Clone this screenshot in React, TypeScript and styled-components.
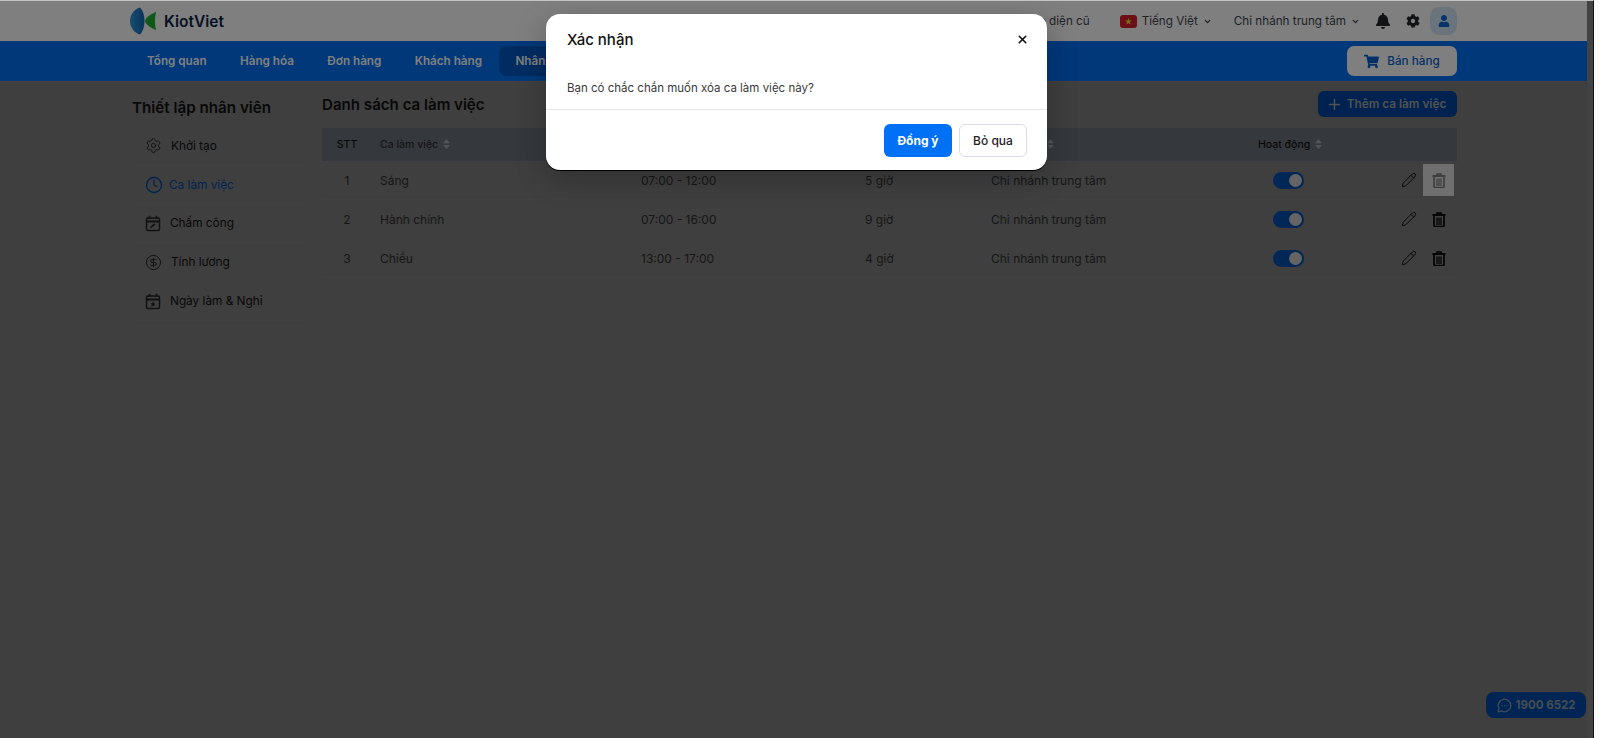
import React from "react";
import styled, { createGlobalStyle } from "styled-components";
import { Settings, Clock, CircleDollarSign, Pencil, Plus, MessageCircleMore, ChevronDown, X } from "lucide-react";
import { FaBell, FaCog, FaUser, FaShoppingCart } from "react-icons/fa";

const Global = createGlobalStyle`
  html, body { margin: 0; padding: 0; height: 738px; overflow: hidden; background: #fbfbfb; }
  body, button { font-family: Inter, "Noto Sans", sans-serif; }
  * { box-sizing: border-box; }
`;

const Frame = styled.div`
  display: flex;
  width: 1600px;
  height: 738px;
  background: #fbfbfb;
`;
const Window = styled.div`
  position: relative;
  width: 1594px;
  height: 738px;
  display: flex;
  overflow: hidden;
  border-top: 1px solid #c4c4c4;
  border-right: 1px solid #111;
`;
const Page = styled.div`
  width: 1587px;
  display: flex;
  flex-direction: column;
  background: #7e7e7e;
`;
const ScrollStrip = styled.div`
  flex: 1;
  background: #858585;
`;
const TopBar = styled.header`
  height: 40px;
  flex: none;
  display: flex;
  align-items: center;
  padding: 0 130px 0 130px;
`;
const TopBarWrap = styled.div`
  background: #ffffff;
`;
const Logo = styled.div`
  display: flex;
  align-items: center;
  gap: 7px;
  font-size: 15.5px;
  font-weight: 600;
  color: #0b2347;
`;
const TopLinks = styled.div`
  margin-left: auto;
  display: flex;
  align-items: center;
  font-size: 11.7px;
  color: #3f4650;
`;
const TopLink = styled.span<{ $gap?: number }>`
  display: inline-flex;
  align-items: center;
  gap: 5px;
  margin-right: ${(p) => p.$gap ?? 0}px;
`;
const IconBtn = styled.span<{ $gap?: number }>`
  display: inline-flex;
  color: #22262b;
  margin-right: ${(p) => p.$gap ?? 0}px;
`;
const Avatar = styled.span`
  width: 27px;
  height: 28px;
  border-radius: 9px;
  background: #d7e6f8;
  color: #0a66d8;
  display: inline-flex;
  align-items: center;
  justify-content: center;
`;
const NavBar = styled.nav`
  height: 40px;
  flex: none;
  background: #0070f4;
  display: flex;
  align-items: center;
  padding: 0 130px 0 131px;
`;
const NavItem = styled.a<{ $active?: boolean }>`
  height: 30px;
  display: flex;
  align-items: center;
  padding: 0 17.4px 0 16px;
  border-radius: 7px;
  font-size: 11.7px;
  font-weight: 600;
  color: #fff;
  background: ${(p) => (p.$active ? "#0058c4" : "transparent")};
`;
const SellBtn = styled.button`
  margin-left: auto;
  width: 110px;
  height: 30px;
  border: 0;
  border-radius: 7px;
  background: #fff;
  color: #0a5fd0;
  font-size: 11.7px;
  font-weight: 500;
  display: flex;
  align-items: center;
  justify-content: center;
  gap: 8px;
`;
const Body = styled.main`
  display: flex;
  padding: 10px 130px 0 131px;
  flex: 1;
`;
const Side = styled.aside`
  width: 191px;
  flex: none;
`;
const SideTitle = styled.h2`
  margin: 7px 0 9px 1px;
  font-size: 15.2px;
  line-height: 20px;
  font-weight: 600;
  color: #111;
`;
const SideRow = styled.div<{ $active?: boolean }>`
  height: 38.800px;
  width: 174px;
  padding: 0 0 0 14px;
  display: flex;
  align-items: center;
  gap: ${(p) => (p.$active ? 6 : 9)}px;
  font-size: 11.8px;
  color: ${(p) => (p.$active ? "#0048a0" : "#111")};
  font-weight: 400;
  border-bottom: 1px solid #828282;
`;
const Content = styled.section`
  flex: 1;
  min-width: 0;
`;
const ContentHead = styled.div`
  height: 26px;
  display: flex;
  align-items: center;
  justify-content: space-between;
`;
const ContentTitle = styled.h1`
  margin: 1px 0 0 0;
  font-size: 15.1px;
  font-weight: 600;
  color: #111;
`;
const AddBtn = styled.button`
  width: 139px;
  height: 26px;
  border: 0;
  border-radius: 6px;
  padding: 0 3px 0 0;
  background: #0044a0;
  color: #a4a4a4;
  font-size: 11.8px;
  font-weight: 600;
  display: flex;
  align-items: center;
  justify-content: center;
  gap: 4px;
`;
const Table = styled.div`
  margin-top: 11px;
`;
const Cols = "50px 261px 224px 126px 267px 140px 1fr";
const HeadRow = styled.div`
  display: grid;
  grid-template-columns: ${Cols};
  height: 33px;
  align-items: center;
  background: #6a737b;
  font-size: 10.5px;
  font-weight: 500;
  color: #111;
  padding-bottom: 1px;
`;
const HeadCell = styled.span<{ $center?: boolean; $muted?: boolean }>`
  display: inline-flex;
  align-items: center;
  gap: 5px;
  padding-left: ${(p) => (p.$center ? 0 : 8)}px;
  justify-content: ${(p) => (p.$center ? "center" : "flex-start")};
  color: ${(p) => (p.$muted ? "#2a2a2a" : "#111")};
`;
const Row = styled.div`
  display: grid;
  grid-template-columns: ${Cols};
  height: 39px;
  align-items: center;
  border-bottom: 1px solid #838383;
  font-size: 12px;
  color: #2e2e2e;
`;
const Cell = styled.span<{ $center?: boolean }>`
  padding-left: ${(p) => (p.$center ? 0 : 8)}px;
  text-align: ${(p) => (p.$center ? "center" : "left")};
`;
const ToggleCell = styled.span`
  padding-left: 23px;
  display: flex;
`;
const Toggle = styled.span`
  width: 31px;
  height: 17px;
  border-radius: 9px;
  background: #004eac;
  padding: 2px;
  display: flex;
  justify-content: flex-end;
`;
const Knob = styled.span`
  width: 13px;
  height: 13px;
  border-radius: 50%;
  background: #c8c8c8;
`;
const Actions = styled.span`
  display: flex;
  align-items: center;
  padding-left: 9px;
  gap: 9px;
`;
const EditIcon = styled.span`
  width: 20px;
  display: inline-flex;
  justify-content: center;
  color: #111;
`;
const TrashBox = styled.span<{ $hover?: boolean }>`
  width: 31px;
  height: 32px;
  margin-left: -5px;
  display: inline-flex;
  align-items: center;
  justify-content: center;
  background: ${(p) => (p.$hover ? "#dedede" : "transparent")};
  color: ${(p) => (p.$hover ? "#777" : "#000")};
`;
const Hotline = styled.div`
  position: absolute;
  left: 1486px;
  top: 691px;
  width: 100px;
  height: 26px;
  border-radius: 8px;
  background: #004aa8;
  color: #8f98a6;
  font-size: 11.5px;
  font-weight: 700;
  display: flex;
  align-items: center;
  justify-content: center;
  gap: 4px;
`;
const Overlay = styled.div`
  position: absolute;
  inset: 0;
  background: rgba(0, 0, 0, 0.5);
  display: flex;
  justify-content: center;
  align-items: flex-start;
  padding-top: 13px;
`;
const Modal = styled.div`
  width: 501px;
  height: 156px;
  background: #fff;
  border-radius: 14px;
  box-shadow: 0 1px 0 #000, 0 8px 30px rgba(0, 0, 0, 0.25);
  display: flex;
  flex-direction: column;
`;
const ModalHead = styled.div`
  height: 51px;
  padding: 0 20px 0 21px;
  display: flex;
  align-items: center;
  justify-content: space-between;
  font-size: 15px;
  font-weight: 500;
  color: #111;
`;
const CloseMark = styled.span`
  display: inline-flex;
  margin-right: -2px;
`;
const ModalBody = styled.div`
  height: 45px;
  padding: 14px 21px 0;
  font-size: 11.5px;
  line-height: 18px;
  color: #3a3a3a;
  border-bottom: 1px solid #e6e6e6;
`;
const ModalFoot = styled.div`
  flex: 1;
  display: flex;
  justify-content: flex-end;
  align-items: center;
  gap: 7px;
  padding: 0 20px;
`;
const Primary = styled.button`
  width: 68px;
  height: 33px;
  border: 0;
  border-radius: 6px;
  background: #0070f4;
  color: #fff;
  font-size: 12px;
  font-weight: 700;
`;
const Secondary = styled.button`
  width: 68px;
  height: 33px;
  border: 1px solid #d9dde2;
  border-radius: 6px;
  background: #fff;
  color: #222;
  font-size: 12px;
  font-weight: 500;
`;

const SortIcon = () => (
  <svg width="7" height="10" viewBox="0 0 8 11" fill="#a4acb4">
    <path d="M4 0 8 4.500H0zM4 11 0 6.500h8z" />
  </svg>
);
const LogoMark = () => (
  <svg width="27" height="28" viewBox="0 0 27 28">
    <defs>
      <linearGradient id="lg" x1="0" x2="1" y1="0" y2="0">
        <stop offset="0" stopColor="#2f9bd8" />
        <stop offset="1" stopColor="#1366b8" />
      </linearGradient>
    </defs>
    <path d="M10 0.500C4 2 0 8 0 14s4 12 10 13.500c3-3 4.500-8 4.500-13.500S13 3.500 10 .5z" fill="url(#lg)" />
    <path d="M26 5C21 7 16 10 15 14c1 4 6 7 11 9-.8-3-1-6-1-9s.2-6 1-9z" fill="#18b233" />
  </svg>
);
const Flag = () => (
  <svg width="17" height="13" viewBox="0 0 17 13">
    <rect width="17" height="13" rx="3" fill="#d9202a" />
    <path d="M8.500 3l.9 2.500h2.600l-2.100 1.600.8 2.500-2.200-1.500-2.200 1.500.8-2.500L5 5.500h2.600z" fill="#ffd83a" />
  </svg>
);
const CalendarIcon = ({ star }: { star?: boolean }) => (
  <svg width="16" height="17" viewBox="0 0 16 17" fill="none" stroke="#222" strokeWidth="1.500">
    <rect x="1.500" y="3" width="13" height="12.500" rx="1.500" />
    <path d="M1 6.500h14" strokeWidth="2" />
    <path d="M4.500 .8v3M11.500 .8v3" strokeWidth="1.600" />
    {star ? (
      <path d="M8 8.500l.8 1.700 1.800.2-1.300 1.200.4 1.800L8 12.500l-1.700.9.400-1.800-1.300-1.200 1.800-.2z" fill="#222" stroke="none" />
    ) : (
      <path d="M5.500 12.500 10 9" strokeWidth="1.600" />
    )}
  </svg>
);
const TrashIcon = () => (
  <svg width="14" height="15" viewBox="0 0 14 15" fill="none" stroke="currentColor">
    <path d="M0.500 3h13" strokeWidth="1.800" />
    <path d="M5 2.500V1h4v1.500" strokeWidth="1.500" />
    <path d="M2 3.500v10a1 1 0 0 0 1 1h8a1 1 0 0 0 1-1v-10" strokeWidth="1.600" />
    <path d="M5 5.500V13M7 5.500V13M9 5.500V13" strokeWidth="1.200" />
  </svg>
);

const navItems = ["Tổng quan", "Hàng hóa", "Đơn hàng", "Khách hàng"];
const shifts = [
  { id: 1, name: "Sáng", time: "07:00 - 12:00", hours: "5 giờ" },
  { id: 2, name: "Hành chính", time: "07:00 - 16:00", hours: "9 giờ" },
  { id: 3, name: "Chiều", time: "13:00 - 17:00", hours: "4 giờ" },
];

export default function App() {
  return (
    <Frame>
      <Global />
      <Window>
        <Page>
          <TopBarWrap>
            <TopBar>
              <Logo>
                <LogoMark />
                KiotViet
              </Logo>
              <TopLinks>
                <TopLink $gap={30}>Giao diện cũ</TopLink>
                <TopLink $gap={22}>
                  <Flag />
                  Tiếng Việt
                  <ChevronDown size={9} strokeWidth={3.5} />
                </TopLink>
                <TopLink $gap={15}>
                  Chi nhánh trung tâm
                  <ChevronDown size={9} strokeWidth={3.5} />
                </TopLink>
                <IconBtn $gap={15}>
                  <FaBell size={16} />
                </IconBtn>
                <IconBtn $gap={10}>
                  <FaCog size={14} />
                </IconBtn>
                <Avatar>
                  <FaUser size={12} />
                </Avatar>
              </TopLinks>
            </TopBar>
          </TopBarWrap>
          <NavBar>
            {navItems.map((n) => (
              <NavItem key={n}>{n}</NavItem>
            ))}
            <NavItem $active>Nhân viên</NavItem>
            <SellBtn>
              <FaShoppingCart size={15} />
              Bán hàng
            </SellBtn>
          </NavBar>
          <Body>
            <Side>
              <SideTitle>Thiết lập nhân viên</SideTitle>
              <SideRow>
                <Settings size={17} strokeWidth={1.4} color="#222" />
                Khởi tạo
              </SideRow>
              <SideRow $active>
                <Clock size={18} strokeWidth={1.8} color="#0048a0" />
                Ca làm việc
              </SideRow>
              <SideRow>
                <CalendarIcon />
                Chấm công
              </SideRow>
              <SideRow>
                <CircleDollarSign size={17} strokeWidth={1.4} color="#222" />
                Tính lương
              </SideRow>
              <SideRow>
                <CalendarIcon star />
                Ngày làm & Nghỉ
              </SideRow>
            </Side>
            <Content>
              <ContentHead>
                <ContentTitle>Danh sách ca làm việc</ContentTitle>
                <AddBtn>
                  <Plus size={17} />
                  Thêm ca làm việc
                </AddBtn>
              </ContentHead>
              <Table>
                <HeadRow>
                  <HeadCell $center>STT</HeadCell>
                  <HeadCell $muted>
                    Ca làm việc <SortIcon />
                  </HeadCell>
                  <HeadCell $muted>Thời gian</HeadCell>
                  <HeadCell $muted>Số giờ</HeadCell>
                  <HeadCell $muted>
                    Chi nhánh <SortIcon />
                  </HeadCell>
                  <HeadCell>
                    Hoạt động <SortIcon />
                  </HeadCell>
                  <span />
                </HeadRow>
                {shifts.map((s) => (
                  <Row key={s.id}>
                    <Cell $center>{s.id}</Cell>
                    <Cell>{s.name}</Cell>
                    <Cell>{s.time}</Cell>
                    <Cell>{s.hours}</Cell>
                    <Cell>Chi nhánh trung tâm</Cell>
                    <ToggleCell>
                      <Toggle>
                        <Knob />
                      </Toggle>
                    </ToggleCell>
                    <Actions>
                      <EditIcon>
                        <Pencil size={16} strokeWidth={1.5} />
                      </EditIcon>
                      <TrashBox $hover={s.id === 1}>
                        <TrashIcon />
                      </TrashBox>
                    </Actions>
                  </Row>
                ))}
              </Table>
            </Content>
          </Body>
        </Page>
        <ScrollStrip />
        <Hotline>
          <MessageCircleMore size={15} />
          1900 6522
        </Hotline>
        <Overlay>
          <Modal>
            <ModalHead>
              Xác nhận
              <CloseMark>
                <X size={13} strokeWidth={3} color="#111" />
              </CloseMark>
            </ModalHead>
            <ModalBody>Bạn có chắc chắn muốn xóa ca làm việc này?</ModalBody>
            <ModalFoot>
              <Primary>Đồng ý</Primary>
              <Secondary>Bỏ qua</Secondary>
            </ModalFoot>
          </Modal>
        </Overlay>
      </Window>
    </Frame>
  );
}
